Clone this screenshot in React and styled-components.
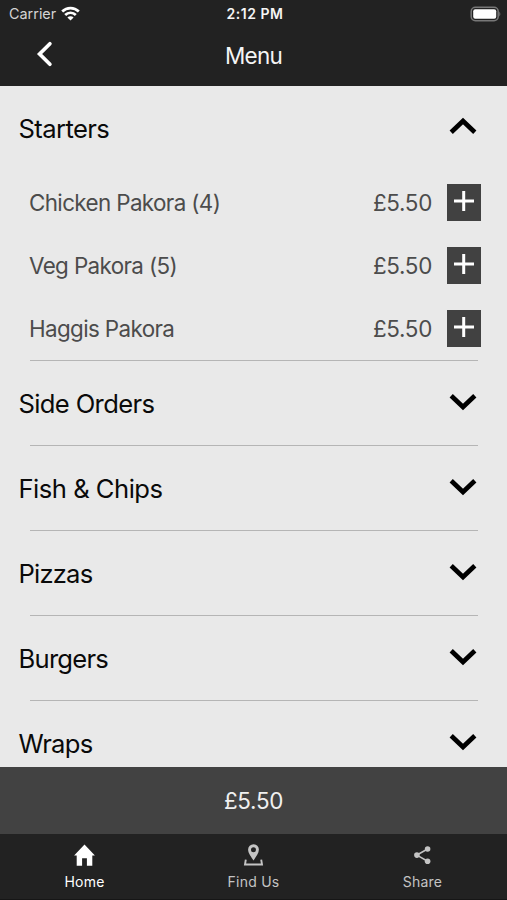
import { useState } from "react";
import styled, { createGlobalStyle } from "styled-components";

const GlobalStyle = createGlobalStyle`
  * {
    box-sizing: border-box;
  }

  body {
    margin: 0;
    background-color: #222;
    font-family: Inter, "Liberation Sans", sans-serif;
  }

  button {
    border: none;
    background: none;
    padding: 0;
    font-family: inherit;
    cursor: pointer;
  }
`;

const Screen = styled.div`
  width: 507px;
  height: 900px;
  display: flex;
  flex-direction: column;
  overflow: hidden;
  background-color: #e9e9e9;
`;

const Header = styled.header`
  flex: none;
  height: 86px;
  background-color: #222;
  color: #f5f5f5;
`;

const StatusBar = styled.div`
  height: 27px;
  padding: 0 6px 0 9px;
  display: grid;
  grid-template-columns: 1fr auto 1fr;
  align-items: center;
`;

const Carrier = styled.div`
  display: flex;
  align-items: center;
  gap: 5px;
  font-size: 14.4px;
  letter-spacing: 0;
  color: #d4d4d4;
`;

const Time = styled.span`
  font-size: 14px;
  font-weight: 600;
  letter-spacing: 0.55px;
`;

const Battery = styled.svg`
  justify-self: end;
`;

const NavBar = styled.div`
  height: 59px;
  padding: 0 36px 2px;
  display: grid;
  grid-template-columns: 1fr auto 1fr;
  align-items: center;
`;

const BackButton = styled.button`
  width: 18px;
  height: 28px;
  margin-bottom: 3px;
  color: #fff;
`;

const Heading = styled.h1`
  margin: 0;
  font-size: 22.5px;
  font-weight: 400;
  letter-spacing: -0.8px;
`;

const MenuList = styled.main`
  flex: 1;
  min-height: 0;
  overflow: hidden;
`;

const Section = styled.section`
  & + &::before {
    content: "";
    display: block;
    height: 1px;
    margin: 0 29px 0 30px;
    background-color: #b5b5b5;
  }
`;

const SectionHeader = styled.button`
  width: 100%;
  height: ${(props) => (props.$first ? 85 : 84)}px;
  padding: 0 30px 0 18.5px;
  display: flex;
  align-items: center;
  justify-content: space-between;
  color: #0a0a0a;
`;

const SectionTitle = styled.span`
  font-size: 25.6px;
  letter-spacing: ${(props) => props.$tracking}px;
`;

const Chevron = styled.svg`
  display: block;
  margin-bottom: ${(props) => (props.$open ? 6 : 3)}px;
  transform: ${(props) => (props.$open ? "rotate(180deg)" : "none")};
`;

const Item = styled.div`
  height: 63px;
  padding: 0 26px 0 29px;
  display: flex;
  align-items: center;
  font-size: 22.4px;
  color: #4c4c4c;
`;

const ItemName = styled.span`
  flex: 1;
  letter-spacing: -0.62px;
`;

const Price = styled.span`
  margin-right: 15px;
  letter-spacing: -0.3px;
`;

const AddButton = styled.button`
  width: 34px;
  height: 37px;
  padding-bottom: 3px;
  display: flex;
  align-items: center;
  justify-content: center;
  background-color: #414141;
`;

const Basket = styled.div`
  flex: none;
  height: 67px;
  display: flex;
  align-items: center;
  justify-content: center;
  background-color: #424242;
  color: #f0f0f0;
  font-size: 22.4px;
  letter-spacing: -0.3px;
`;

const TabBar = styled.nav`
  flex: none;
  height: 66px;
  display: grid;
  grid-template-columns: repeat(3, 1fr);
  background-color: #222;
  border-bottom: 1px solid #161616;
`;

const Tab = styled.button`
  padding-top: 9px;
  display: flex;
  flex-direction: column;
  align-items: center;
  gap: 6px;
  font-size: 14px;
  line-height: 17px;
  letter-spacing: 0.25px;
  color: ${(props) => (props.$active ? "#fff" : "#c4c4c4")};
`;

const sections = [
  {
    name: "Starters",
    tracking: -0.6,
    items: [
      { name: "Chicken Pakora (4)", price: 5.5 },
      { name: "Veg Pakora (5)", price: 5.5 },
      { name: "Haggis Pakora", price: 5.5 },
    ],
  },
  { name: "Side Orders", tracking: -0.65, items: [] },
  { name: "Fish & Chips", tracking: -0.5, items: [] },
  { name: "Pizzas", tracking: -0.8, items: [] },
  { name: "Burgers", tracking: -0.75, items: [] },
  { name: "Wraps", tracking: -0.7, items: [] },
];

function HomeIcon() {
  return (
    <svg width="22" height="24" viewBox="0.5 0 22 24" fill="currentColor">
      <path d="M11 1.6 L21.4 12.4 H18.8 V22.8 H13.4 V15.2 H8.6 V22.8 H3.2 V12.4 H0.6 Z" />
    </svg>
  );
}

function FindIcon() {
  return (
    <svg width="22" height="24" viewBox="0.5 0 22 24" fill="none">
      <path
        d="M11 17.6 C9 14.2 5.6 10.6 5.6 6.6 A5.4 5.4 0 0 1 16.4 6.6 C16.4 10.6 13 14.2 11 17.6 Z M11 4.3 A2.5 2.5 0 1 0 11 9.3 A2.5 2.5 0 1 0 11 4.3 Z"
        fill="currentColor"
        fillRule="evenodd"
      />
      <path d="M3.3 16.6 L2.5 21.5 H19.5 L18.7 16.6" stroke="currentColor" strokeWidth="1.9" />
    </svg>
  );
}

function ShareIcon() {
  return (
    <svg width="22" height="24" viewBox="0.7 0 22 24" fill="currentColor">
      <path d="M16.3 6 L5.6 12.1 L16.3 18.2" fill="none" stroke="currentColor" strokeWidth="1.6" />
      <circle cx="16.3" cy="6" r="2.8" />
      <circle cx="5.6" cy="12.1" r="2.8" />
      <circle cx="16.3" cy="18.2" r="2.8" />
    </svg>
  );
}

const tabs = [
  { name: "Home", Icon: HomeIcon },
  { name: "Find Us", Icon: FindIcon },
  { name: "Share", Icon: ShareIcon },
];

const formatPrice = (value) => `£${value.toFixed(2)}`;

function App() {
  const [open, setOpen] = useState("Starters");
  const [total, setTotal] = useState(5.5);
  const [activeTab, setActiveTab] = useState("Home");

  return (
    <>
      <GlobalStyle />
      <Screen>
        <Header>
          <StatusBar>
            <Carrier>
              Carrier
              <svg width="19" height="15" viewBox="0 0 19 15" fill="none" stroke="#fff" strokeWidth="2.7">
                <path d="M1.2 5.5 A11.8 11.8 0 0 1 17.8 5.5" />
                <path d="M4.2 9 A7.4 7.4 0 0 1 14.8 9" />
                <path d="M9.5 14.6 L6.4 11.5 A4.4 4.4 0 0 1 12.6 11.5 Z" fill="#fff" stroke="none" />
              </svg>
            </Carrier>
            <Time>2:12 PM</Time>
            <Battery width="31" height="16" viewBox="0 0 31 16" fill="none">
              <rect x="1.2" y="1.2" width="27" height="13.6" rx="4.2" stroke="#777" strokeWidth="1.5" />
              <rect x="3.2" y="3.2" width="23" height="9.6" rx="2" fill="#fff" />
              <path d="M29.3 5.5 Q31.4 8 29.3 10.5 Z" fill="#777" />
            </Battery>
          </StatusBar>
          <NavBar>
            <BackButton aria-label="Back">
              <svg width="18" height="28" viewBox="0 0 18 28" fill="none">
                <path
                  d="M13.9 3.8 L3.6 14 L13.9 24.2"
                  stroke="currentColor"
                  strokeWidth="3.7"
                  strokeLinecap="round"
                />
              </svg>
            </BackButton>
            <Heading>Menu</Heading>
          </NavBar>
        </Header>

        <MenuList>
          {sections.map((section, index) => (
            <Section key={section.name}>
              <SectionHeader
                $first={index === 0}
                onClick={() => setOpen(open === section.name ? null : section.name)}
              >
                <SectionTitle $tracking={section.tracking}>{section.name}</SectionTitle>
                <Chevron $open={open === section.name} width="28" height="18" viewBox="0 0 28 18" fill="none">
                  <path d="M2.2 2.8 L14 14 L25.8 2.8" stroke="#000" strokeWidth="4.7" />
                </Chevron>
              </SectionHeader>
              {open === section.name &&
                section.items.map((item) => (
                  <Item key={item.name}>
                    <ItemName>{item.name}</ItemName>
                    <Price>{formatPrice(item.price)}</Price>
                    <AddButton
                      aria-label={`Add ${item.name}`}
                      onClick={() => setTotal(total + item.price)}
                    >
                      <svg width="20" height="20" viewBox="0 0 20 20">
                        <path d="M9.7 0 V20 M0 10 H20" stroke="#fff" strokeWidth="3" />
                      </svg>
                    </AddButton>
                  </Item>
                ))}
            </Section>
          ))}
        </MenuList>

        <Basket>{formatPrice(total)}</Basket>

        <TabBar>
          {tabs.map(({ name, Icon }) => (
            <Tab key={name} $active={activeTab === name} onClick={() => setActiveTab(name)}>
              <Icon />
              {name}
            </Tab>
          ))}
        </TabBar>
      </Screen>
    </>
  );
}

export default App;
